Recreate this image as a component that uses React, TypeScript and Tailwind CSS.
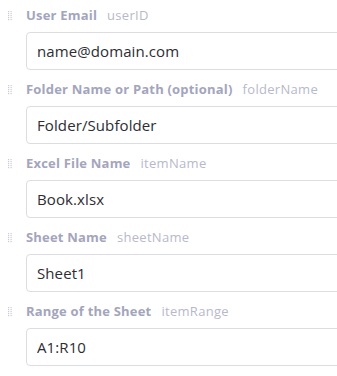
import { useState } from "react"

type Field = { label: string; name: string; value: string }

const fields: Field[] = [
  { label: "User Email", name: "userID", value: "name@domain.com" },
  { label: "Folder Name or Path (optional)", name: "folderName", value: "Folder/Subfolder" },
  { label: "Excel File Name", name: "itemName", value: "Book.xlsx" },
  { label: "Sheet Name", name: "sheetName", value: "Sheet1" },
  { label: "Range of the Sheet", name: "itemRange", value: "A1:R10" },
]

function DragHandle() {
  return (
    <svg width="4" height="10" viewBox="0 0 4 10" className="shrink-0">
      {[0, 2, 4, 6, 8].map((y) => (
        <g key={y} fill="#c9cbd6">
          <rect x="0" y={y} width="1.2" height="1.2" />
          <rect x="2.5" y={y} width="1.2" height="1.2" />
        </g>
      ))}
    </svg>
  )
}

export default function App() {
  const [values, setValues] = useState(fields.map((f) => f.value))

  return (
    <div className="w-[337px] h-[376px] overflow-hidden bg-white font-['Open_Sans',sans-serif]">
      <div className="flex flex-col gap-[11px] pt-[7px]">
        {fields.map((f, i) => (
          <div key={f.name} className="flex flex-col">
            <div className="flex items-center h-[18px]">
              <div className="w-[26px] pl-[8px] flex items-center">
                <DragHandle />
              </div>
              <span className="text-[13px] font-bold text-[#a3a5bd] tracking-[0.2px]">{f.label}</span>
              <span className="ml-[10px] text-[13px] text-[#b7b9ca] tracking-[0.3px]">{f.name}</span>
            </div>
            <div className="pl-[26px] mt-[7px] -mr-[20px]">
              <input
                value={values[i]}
                onChange={(e) => {
                  const next = [...values]
                  next[i] = e.target.value
                  setValues(next)
                }}
                className="w-full h-[38px] rounded-[4px] border border-[#dcdde2] px-[10px] text-[15px] text-[#2d2d33] tracking-[0.1px] outline-none"
              />
            </div>
          </div>
        ))}
      </div>
    </div>
  )
}
